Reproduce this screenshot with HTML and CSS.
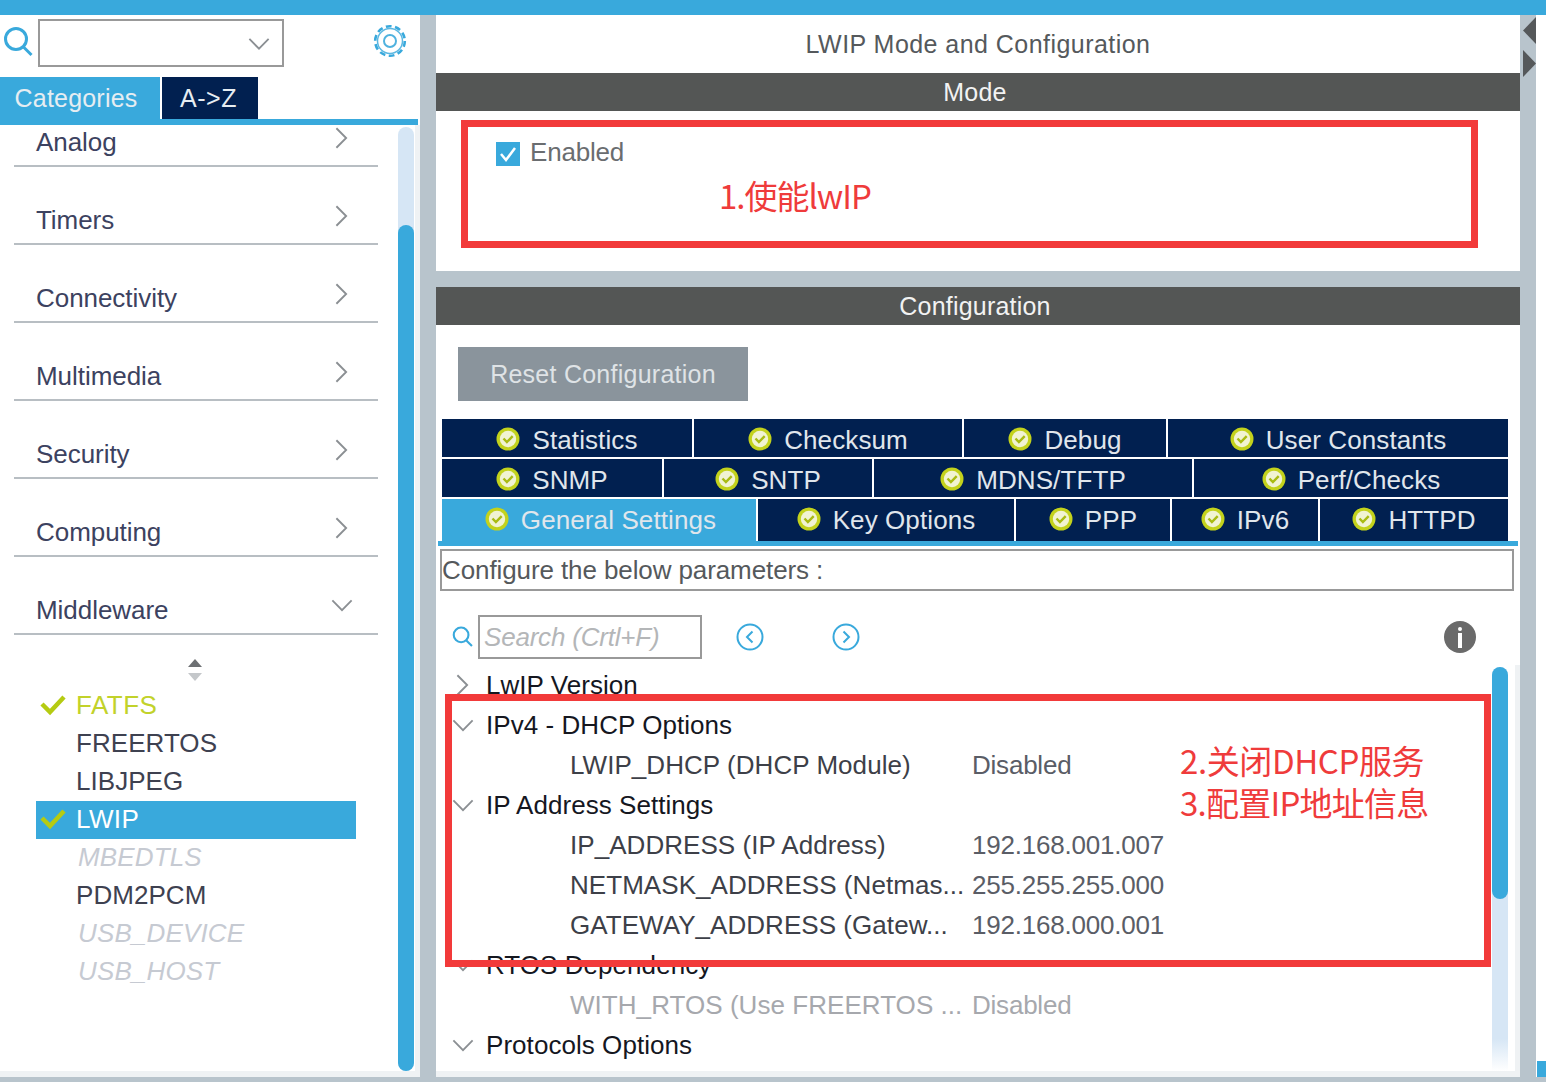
FILE: index.html
```html
<!DOCTYPE html>
<html lang="en">
<head>
<meta charset="utf-8">
<title>LWIP Mode and Configuration</title>
<link rel="stylesheet" href="styles.css">
</head>
<body>
<svg class="defs" width="0" height="0">
  <defs>
    <symbol id="ok" viewBox="0 0 24 24">
      <circle cx="12" cy="12" r="11.5" fill="#c3d21c"/>
      <circle cx="12" cy="12" r="8.2" fill="#f1f3d2"/>
      <path d="M7.5 11.5l3.4 3.6 5.8-6" fill="none" stroke="#a9bb12" stroke-width="2.4"/>
    </symbol>
    <symbol id="mag" viewBox="0 0 30 34">
      <circle cx="13" cy="14" r="10.5" fill="none" stroke="#39a9dc" stroke-width="3"/>
      <path d="M20.5 22l8 8" fill="none" stroke="#39a9dc" stroke-width="3"/>
    </symbol>
    <symbol id="right" viewBox="0 0 14 24">
      <path d="M1.5 1.5L12 12 1.5 22.5" fill="none" stroke="#8b8f93" stroke-width="2"/>
    </symbol>
    <symbol id="down" viewBox="0 0 24 14">
      <path d="M1.5 1.5L12 12 22.5 1.5" fill="none" stroke="#8b8f93" stroke-width="2"/>
    </symbol>
    <symbol id="tick" viewBox="0 0 26 22">
      <path d="M2 10l8 8L24 3" fill="none" stroke="#b5cb12" stroke-width="4.5"/>
    </symbol>
  </defs>
</svg>
<div class="topbar"></div>
<div class="workspace">
  <aside class="side">
    <div class="finder">
      <svg class="finder-mag"><use href="#mag"/></svg>
      <div class="combo"><svg class="combo-arrow"><use href="#down"/></svg></div>
      <svg class="gear" viewBox="0 0 34 34">
        <circle cx="17" cy="17" r="14.800" fill="none" stroke="#39a9dc" stroke-width="2.600" stroke-dasharray="5.800 3.500"/>
        <circle cx="17" cy="17" r="12.500" fill="#fff" stroke="#5cb8e2" stroke-width="1.500"/>
        <circle cx="17" cy="17" r="6" fill="none" stroke="#4fb2df" stroke-width="2"/>
      </svg>
    </div>
    <div class="side-tabs">
      <div class="side-tab side-tab-on">Categories</div>
      <div class="side-tab side-tab-off">A-&gt;Z</div>
    </div>
    <div class="side-line"></div>
    <div class="side-body">
      <div class="side-scroll">
        <div class="cat cat-first"><span>Analog</span><svg class="chev-r"><use href="#right"/></svg></div>
        <div class="cat"><span>Timers</span><svg class="chev-r"><use href="#right"/></svg></div>
        <div class="cat"><span>Connectivity</span><svg class="chev-r"><use href="#right"/></svg></div>
        <div class="cat"><span>Multimedia</span><svg class="chev-r"><use href="#right"/></svg></div>
        <div class="cat"><span>Security</span><svg class="chev-r"><use href="#right"/></svg></div>
        <div class="cat"><span>Computing</span><svg class="chev-r"><use href="#right"/></svg></div>
        <div class="cat"><span>Middleware</span><svg class="chev-d"><use href="#down"/></svg></div>
        <div class="sorter">
          <svg class="sort-icon" viewBox="0 0 16 22"><path d="M8 0l7 8H1z" fill="#6d7073"/><path d="M8 22l7-8H1z" fill="#c4c7ca"/></svg>
        </div>
        <ul class="mw">
          <li class="mw-item mw-ok"><svg class="mw-tick"><use href="#tick"/></svg>FATFS</li>
          <li class="mw-item">FREERTOS</li>
          <li class="mw-item">LIBJPEG</li>
          <li class="mw-item mw-sel"><svg class="mw-tick"><use href="#tick"/></svg>LWIP</li>
          <li class="mw-item mw-off">MBEDTLS</li>
          <li class="mw-item">PDM2PCM</li>
          <li class="mw-item mw-off">USB_DEVICE</li>
          <li class="mw-item mw-off">USB_HOST</li>
        </ul>
      </div>
      <div class="sbar sbar-side"><div class="sbar-thumb"></div></div>
    </div>
    <div class="foot"></div>
  </aside>

  <div class="gutter"></div>

  <main class="main">
    <div class="title">LWIP Mode and Configuration</div>
    <div class="bar bar-mode">Mode</div>
    <section class="mode">
      <label class="enable">
        <svg class="checkbox" viewBox="0 0 24 24"><rect width="24" height="24" fill="#39a9dc"/><path d="M5 12l5 6 9-12" fill="none" stroke="#fff" stroke-width="2.500"/></svg>
        Enabled
      </label>
      <div class="note note-one">1.使能lwIP</div>
    </section>
    <div class="split"></div>
    <div class="bar">Configuration</div>
    <section class="config">
      <div class="reset-row"><button class="reset">Reset Configuration</button></div>
      <div class="tabs">
        <div class="tab-row tab-row-a">
          <div class="tab"><svg class="tab-ok"><use href="#ok"/></svg>Statistics</div>
          <div class="tab"><svg class="tab-ok"><use href="#ok"/></svg>Checksum</div>
          <div class="tab"><svg class="tab-ok"><use href="#ok"/></svg>Debug</div>
          <div class="tab"><svg class="tab-ok"><use href="#ok"/></svg>User Constants</div>
        </div>
        <div class="tab-row tab-row-b">
          <div class="tab"><svg class="tab-ok"><use href="#ok"/></svg>SNMP</div>
          <div class="tab"><svg class="tab-ok"><use href="#ok"/></svg>SNTP</div>
          <div class="tab"><svg class="tab-ok"><use href="#ok"/></svg>MDNS/TFTP</div>
          <div class="tab"><svg class="tab-ok"><use href="#ok"/></svg>Perf/Checks</div>
        </div>
        <div class="tab-row tab-row-c">
          <div class="tab tab-on"><svg class="tab-ok"><use href="#ok"/></svg>General Settings</div>
          <div class="tab"><svg class="tab-ok"><use href="#ok"/></svg>Key Options</div>
          <div class="tab"><svg class="tab-ok"><use href="#ok"/></svg>PPP</div>
          <div class="tab"><svg class="tab-ok"><use href="#ok"/></svg>IPv6</div>
          <div class="tab"><svg class="tab-ok"><use href="#ok"/></svg>HTTPD</div>
        </div>
      </div>
      <div class="tabs-line"></div>
      <div class="hint">Configure the below parameters :</div>
      <div class="tools">
        <svg class="tools-mag"><use href="#mag"/></svg>
        <div class="search">Search (Crtl+F)</div>
        <svg class="nav nav-prev" viewBox="0 0 28 28"><circle cx="14" cy="14" r="12.500" fill="none" stroke="#39a9dc" stroke-width="2"/><path d="M16.500 8.500L11 14l5.500 5.500" fill="none" stroke="#39a9dc" stroke-width="2"/></svg>
        <svg class="nav nav-next" viewBox="0 0 28 28"><circle cx="14" cy="14" r="12.500" fill="none" stroke="#39a9dc" stroke-width="2"/><path d="M11.500 8.500L17 14l-5.500 5.500" fill="none" stroke="#39a9dc" stroke-width="2"/></svg>
        <svg class="info" viewBox="0 0 32 32"><circle cx="16" cy="16" r="16" fill="#6a6a6a"/><rect x="14" y="6" width="4" height="4" rx="2" fill="#fff"/><rect x="14" y="12" width="4" height="15" fill="#fff"/></svg>
      </div>
      <div class="tree-wrap">
        <div class="tree">
          <div class="node"><svg class="chev-r chev-tree"><use href="#right"/></svg><span class="node-head">LwIP Version</span></div>
          <div class="node"><svg class="chev-d chev-tree-d"><use href="#down"/></svg><span class="node-head">IPv4 - DHCP Options</span></div>
          <div class="node node-leaf"><span class="leaf-name">LWIP_DHCP (DHCP Module)</span><span class="leaf-val">Disabled</span></div>
          <div class="node"><svg class="chev-d chev-tree-d"><use href="#down"/></svg><span class="node-head">IP Address Settings</span></div>
          <div class="node node-leaf"><span class="leaf-name">IP_ADDRESS (IP Address)</span><span class="leaf-val">192.168.001.007</span></div>
          <div class="node node-leaf"><span class="leaf-name">NETMASK_ADDRESS (Netmas...</span><span class="leaf-val">255.255.255.000</span></div>
          <div class="node node-leaf"><span class="leaf-name">GATEWAY_ADDRESS (Gatew...</span><span class="leaf-val">192.168.000.001</span></div>
          <div class="node"><svg class="chev-d chev-tree-d"><use href="#down"/></svg><span class="node-head">RTOS Dependency</span></div>
          <div class="node node-leaf node-dim"><span class="leaf-name">WITH_RTOS (Use FREERTOS ...</span><span class="leaf-val">Disabled</span></div>
          <div class="node"><svg class="chev-d chev-tree-d"><use href="#down"/></svg><span class="node-head">Protocols Options</span></div>
        </div>
        <div class="sbar sbar-tree"><div class="sbar-thumb"></div></div>
      </div>
    </section>
    <div class="foot"></div>
    <div class="redbox redbox-mode"></div>
    <div class="redbox redbox-tree"></div>
    <div class="note note-two"><div class="note-line">2.关闭DHCP服务</div><div class="note-line note-line-tight">3.配置IP地址信息</div></div>
  </main>

  <div class="gutter gutter-right">
    <svg class="fold" viewBox="0 0 14 60"><path d="M14 0v27L1 13.500z" fill="#55585a"/><path d="M1 33v27l13-13.500z" fill="#55585a"/></svg>
  </div>
  <div class="edge"><div class="edge-mark"></div></div>
</div>
<div class="bottom"></div>
</body>
</html>
```

FILE: styles.css
```css
* { box-sizing: border-box; }
html, body { margin: 0; padding: 0; height: 100%; }
body {
  width: 1546px;
  height: 1082px;
  overflow: hidden;
  display: flex;
  flex-direction: column;
  background: #fff;
  font-family: "Liberation Sans", Arial, "Noto Sans CJK SC", sans-serif;
  font-size: 26px;
  color: #3c4260;
}
.defs { position: absolute; }
.topbar { height: 15px; flex: none; background: #39a9dc; }
.workspace { flex: 1; min-height: 0; display: flex; }
.bottom { height: 5px; flex: none; background: #b8c4cc; }

.side { width: 420px; flex: none; display: flex; flex-direction: column; background: #fff; }
.finder { height: 62px; flex: none; display: flex; padding: 4px 0 0 3px; }
.finder-mag { width: 30px; height: 34px; margin: 6px 5px 0 0; flex: none; }
.combo { width: 246px; height: 48px; border: 2px solid #999; display: flex; align-items: center; justify-content: flex-end; padding-right: 12px; }
.combo-arrow { width: 22px; height: 14px; margin-top: 2px; }
.gear { width: 34px; height: 34px; margin: 5px 0 0 89px; flex: none; }
.side-tabs { height: 42px; flex: none; display: flex; gap: 2px; }
.side-tab { display: flex; align-items: center; justify-content: center; color: #e6edf2; letter-spacing: .2px; font-size: 25px; }
.side-tab-on { width: 160px; background: #39a9dc; padding-right: 8px; }
.side-tab-off { width: 96px; background: #012050; letter-spacing: .5px; padding-right: 3px; }
.side-line { height: 6px; width: 418px; flex: none; background: #39a9dc; }
.side-body { flex: 1; min-height: 0; display: flex; background: linear-gradient(90deg, #fff 415px, #eff2f4 415px); }
.side-scroll { width: 398px; flex: none; padding-left: 14px; overflow: hidden; }
.cat { width: 364px; height: 78px; border-bottom: 2px solid #b8bec3; display: flex; align-items: flex-end; justify-content: space-between; padding: 0 30px 8px 22px; line-height: 30px; }
.cat-first { height: 42px; }
.cat > span { letter-spacing: -.05px; }
.chev-r { width: 13px; height: 24px; margin-bottom: 7px; flex: none; }
.chev-d { width: 22px; height: 13px; margin: 0 -5px 13px 0; flex: none; }
.sorter { height: 47px; display: flex; justify-content: center; align-items: flex-end; width: 362px; }
.sort-icon { width: 16px; height: 22px; margin-bottom: 1px; }
.mw { list-style: none; margin: 5px 0 0; padding: 0 0 0 22px; }
.mw-item { width: 320px; height: 38px; line-height: 36px; padding-left: 40px; position: relative; color: #3e4150; letter-spacing: .05px; }
.mw-tick { position: absolute; left: 4px; top: 7px; width: 26px; height: 22px; }
.mw-ok { color: #c2d22a; letter-spacing: .5px; }
.mw-sel { background: #39a9dc; color: #fff; letter-spacing: .4px; }
.mw-off { color: #c6cad2; font-style: italic; padding-left: 42px; letter-spacing: .15px; }

.sbar { width: 16px; flex: none; background: #d6e6f5; border-radius: 8px 8px 0 0; }
.sbar-thumb { background: #39a9dc; border-radius: 8px; }
.sbar-side { margin-top: 2px; border-radius: 8px; }
.sbar-side .sbar-thumb { margin-top: 98px; height: 846px; }
.foot { height: 6px; flex: none; background: #eff2f4; }

.gutter { width: 16px; flex: none; background: #b8c4cc; }
.gutter-right { padding-top: 2px; }
.fold { display: block; width: 14px; height: 60px; margin-left: 2px; }
.edge { flex: 1; background: #fff; display: flex; align-items: flex-end; }
.edge-mark { width: 100%; height: 16px; background: #39a9dc; margin-left: 1px; }

.main { width: 1084px; flex: none; display: flex; flex-direction: column; background: #fff; position: relative; }
.title { height: 58px; flex: none; display: flex; align-items: center; justify-content: center; color: #55595c; font-size: 25px; letter-spacing: .45px; }
.bar { height: 38px; flex: none; background: #545655; color: #f2f2f2; display: flex; align-items: center; justify-content: center; padding-right: 6px; font-size: 25px; letter-spacing: .2px; }
.mode { height: 160px; flex: none; padding: 22px 0 0 60px; }
.enable { display: flex; align-items: center; gap: 10px; color: #6a6d70; letter-spacing: -.2px; line-height: 38px; }
.checkbox { width: 24px; height: 24px; margin-top: 3px; }
.split { height: 16px; flex: none; background: #b8c4cc; }
.config { flex: 1; min-height: 0; display: flex; flex-direction: column; }
.reset-row { padding: 22px 0 18px 22px; flex: none; }
.reset { display: block; width: 290px; height: 54px; border: 0; background: #8a949c; color: #dfe3e6; font: inherit; font-size: 25px; letter-spacing: .25px; padding: 0; }
.tabs { display: flex; flex-direction: column; gap: 2px; margin-left: 6px; width: 1066px; flex: none; }
.tab-row { display: grid; gap: 2px; height: 38px; }
.tab-row-a { grid-template-columns: 250px 268px 202px 1fr; }
.tab-row-b { grid-template-columns: 220px 208px 318px 1fr; }
.tab-row-c { grid-template-columns: 314px 256px 154px 146px 1fr; height: 42px; }
.tab { background: #012050; color: #e0e6ec; display: flex; align-items: center; justify-content: center; gap: 12px; letter-spacing: .1px; white-space: nowrap; padding-top: 4px; }
.tab-row-c .tab { padding-top: 0; }
.tab-row-c .tab-on { padding-left: 3px; }
.tab-on { background: #39a9dc; }
.tab-ok { width: 24px; height: 24px; flex: none; margin-top: -2px; }
.tabs-line { height: 5px; flex: none; background: #39a9dc; margin: 0 2px; width: 1080px; }
.hint { height: 42px; flex: none; margin: 3px 6px 0 4px; border: 2px solid #999; line-height: 38px; color: #55595c; letter-spacing: -.1px; white-space: nowrap; }
.tools { height: 74px; flex: none; display: flex; align-items: center; padding: 18px 0 0 16px; }
.tools-mag { width: 21px; height: 24px; flex: none; margin-right: 5px; }
.search { width: 224px; height: 44px; border: 2px solid #999; color: #b4b6b8; font-style: italic; line-height: 40px; padding-left: 4px; flex: none; letter-spacing: -.2px; }
.nav { width: 28px; height: 28px; flex: none; }
.nav-prev { margin-left: 34px; }
.nav-next { margin-left: 68px; }
.info { width: 32px; height: 32px; margin-left: 584px; flex: none; }
.tree-wrap { flex: 1; min-height: 0; display: flex; background: linear-gradient(90deg, #fff 1079px, #eff2f4 1079px); }
.tree { width: 1056px; flex: none; overflow: hidden; color: #111; }
.node { height: 40px; display: flex; align-items: center; position: relative; padding-left: 50px; white-space: nowrap; }
.node-head { letter-spacing: .05px; color: #15171f; }
.node-leaf { padding-left: 134px; color: #4c4f55; }
.leaf-name { width: 402px; flex: none; color: #3d4048; letter-spacing: .05px; }
.leaf-val { color: #5a5d66; letter-spacing: -.22px; }
.node-dim .leaf-name, .node-dim .leaf-val { color: #a6a8ad; }
.chev-tree { position: absolute; left: 20px; top: 8px; margin: 0; height: 24px; }
.chev-tree-d { position: absolute; left: 16px; top: 14px; margin: 0; }
.sbar-tree { margin-top: 2px; background: linear-gradient(#d6e6f5 92%, #fff); }
.sbar-tree .sbar-thumb { height: 232px; }

.redbox { position: absolute; border: 7px solid #f23a3a; pointer-events: none; }
.redbox-mode { left: 25px; top: 105px; width: 1017px; height: 128px; }
.redbox-tree { left: 9px; top: 679px; width: 1046px; height: 273px; }
.note { position: absolute; color: #ef3b3b; font-family: "Noto Sans CJK SC", "Liberation Sans", sans-serif; font-size: 33px; letter-spacing: -.4px; white-space: nowrap; }
.note-one { left: 283px; top: 160px; line-height: 40px; letter-spacing: -1px; }
.note-two { left: 744px; top: 724px; line-height: 42px; }
.note-line-tight { letter-spacing: -.75px; }
```
